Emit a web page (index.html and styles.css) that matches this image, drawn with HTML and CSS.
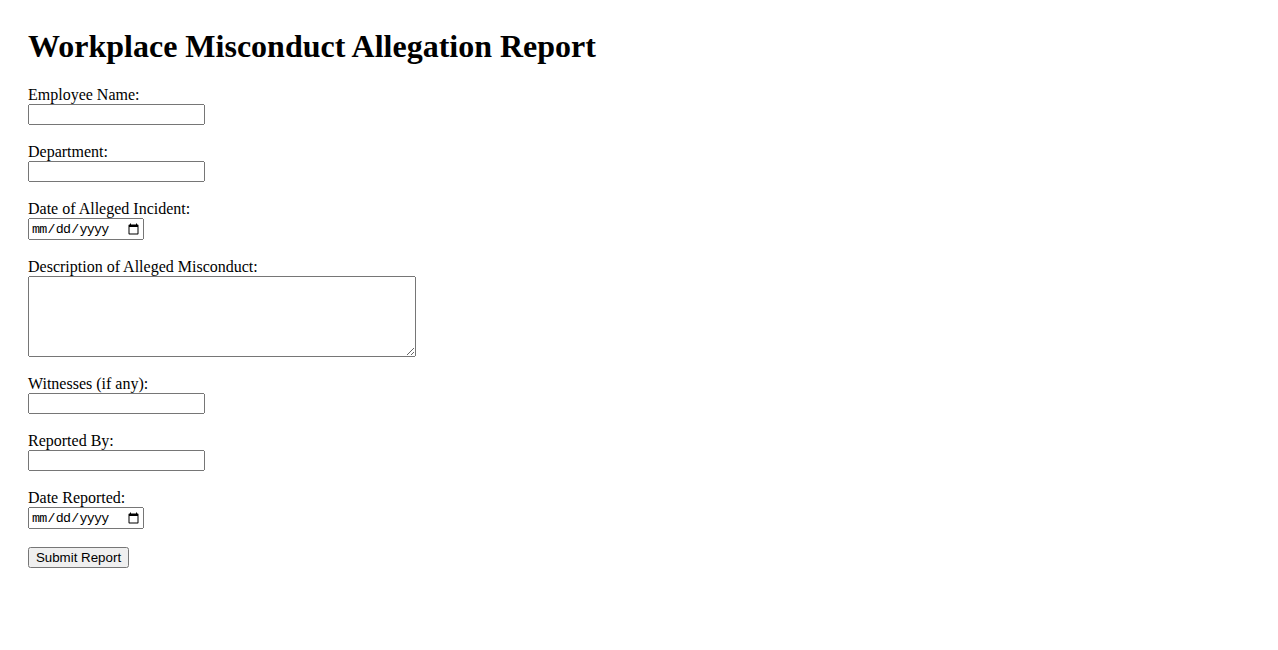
FILE: index.html
```html
<!DOCTYPE html>
<html>
<head>
<meta charset="utf-8">
<title>Workplace Misconduct Allegation Report</title>
<link rel="stylesheet" href="styles.css">
</head>
<body>
<h1 class="title">Workplace Misconduct Allegation Report</h1>
<form class="report">
<label class="lbl" for="name">Employee Name:</label><input class="txt" type="text" id="name"><br><br>
<label class="lbl" for="dept">Department:</label><input class="txt" type="text" id="dept"><br><br>
<label class="lbl" for="date1">Date of Alleged Incident:</label><input class="date" type="date" id="date1"><br><br>
<label class="lbl" for="desc">Description of Alleged Misconduct:</label><textarea class="area" id="desc" rows="5" cols="50"></textarea><br><br>
<label class="lbl" for="wit">Witnesses (if any):</label><input class="txt" type="text" id="wit"><br><br>
<label class="lbl" for="rep">Reported By:</label><input class="txt" type="text" id="rep"><br><br>
<label class="lbl" for="date2">Date Reported:</label><input class="date" type="date" id="date2"><br><br>
<button class="btn" type="submit">Submit Report</button>
</form>
</body>
</html>
```

FILE: styles.css
```css
body {
  margin: 8px;
  padding: 20px;
  font-family: "Liberation Serif", "Times New Roman", serif;
  font-size: 16px;
  color: #000;
  background: #fff;
}
.title {
  margin: 0 0 21.44px 0;
  font-size: 32px;
  font-weight: bold;
}
.report {
  margin: 0;
}
.lbl {
  display: block;
}
.txt {
  box-sizing: border-box;
  width: 177px;
  height: 21px;
}
.date {
  box-sizing: border-box;
  width: 116px;
  height: 22px;
  font-family: "Liberation Mono", monospace;
  letter-spacing: -0.75px;
}
.area {
  box-sizing: border-box;
  width: 388px;
  height: 81px;
  vertical-align: bottom;
}
.btn {
  box-sizing: border-box;
  width: 101px;
  height: 21px;
  padding: 0;
  white-space: nowrap;
  font-family: "Liberation Sans", Arial, sans-serif;
  font-size: 13.33px;
}
```
